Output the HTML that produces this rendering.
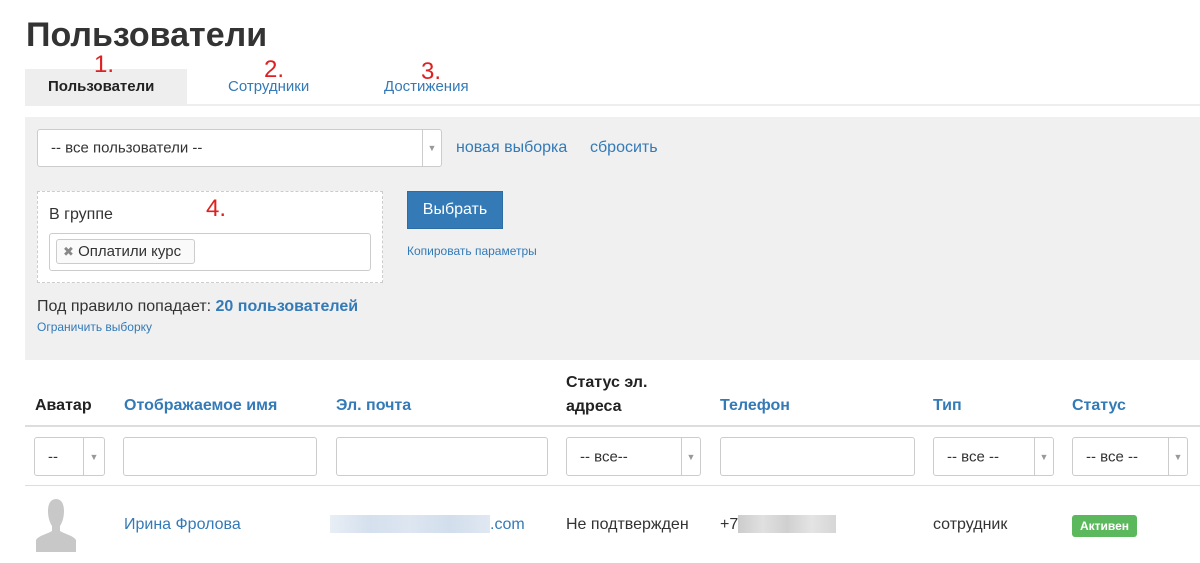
<!DOCTYPE html><html><head><meta charset="utf-8"><style>
body{margin:0;width:1200px;height:563px;overflow:hidden;background:#fff;font-family:"Liberation Sans",sans-serif;position:relative;color:#333}
.a{position:absolute;white-space:nowrap}
.lnk{color:#337ab7}
.red{color:#e02020;font-size:24px}
.sel{position:absolute;background:#fff;border:1px solid #ccc;border-radius:3px;box-sizing:border-box;font-size:15px}
.sel .ar{position:absolute;right:0;top:0;bottom:0;width:18px;border-left:1px solid #ccc;color:#999;font-size:9px;display:flex;align-items:center;justify-content:center}
.sel .t{position:absolute;left:13px;top:50%;transform:translateY(-50%)}
.inp{position:absolute;background:#fff;border:1px solid #ccc;border-radius:3px;box-sizing:border-box}
.h{position:absolute;font-size:16px;font-weight:bold}
</style></head><body>
<div class="a" style="left:26px;top:16px;font-size:34px;font-weight:bold;color:#333">Пользователи</div>
<div class="a" style="left:25px;top:69px;width:162px;height:36px;background:#eee"></div>
<div class="a" style="left:25px;top:104px;width:1175px;height:2px;background:#eee"></div>
<div class="a" style="left:48px;top:78px;font-size:15px;font-weight:bold;color:#222">Пользователи</div>
<div class="a lnk" style="left:228px;top:78px;font-size:15px">Сотрудники</div>
<div class="a lnk" style="left:384px;top:78px;font-size:15px">Достижения</div>
<div class="a red" style="left:94px;top:51px">1.</div>
<div class="a red" style="left:264px;top:56px">2.</div>
<div class="a red" style="left:421px;top:58px">3.</div>
<div class="a" style="left:25px;top:117px;width:1175px;height:243px;background:#f0f0f0"></div>
<div class="sel" style="left:37px;top:129px;width:405px;height:38px"><span class="t">-- все пользователи --</span><span class="ar">▼</span></div>
<div class="a lnk" style="left:456px;top:139px;font-size:16px">новая выборка</div>
<div class="a lnk" style="left:590px;top:139px;font-size:16px">сбросить</div>
<div class="a" style="left:37px;top:191px;width:346px;height:92px;border:1px dashed #ccc;box-sizing:border-box;background:#fff"></div>
<div class="a" style="left:49px;top:206px;font-size:16px">В группе</div>
<div class="a red" style="left:206px;top:195px">4.</div>
<div class="inp" style="left:49px;top:233px;width:322px;height:38px"></div>
<div class="a" style="left:56px;top:239px;width:139px;height:25px;border:1px solid #ccc;border-radius:3px;box-sizing:border-box;background:#fafafa;font-size:15px;padding:3px 0 0 6px"><span style="color:#888;font-size:13px">✖</span> Оплатили курс</div>
<div class="a" style="left:407px;top:191px;width:96px;height:38px;background:#337ab7;border:1px solid #2e6da4;box-sizing:border-box;color:#fff;font-size:16px;text-align:center;line-height:36px">Выбрать</div>
<div class="a lnk" style="left:407px;top:244px;font-size:12px">Копировать параметры</div>
<div class="a" style="left:37px;top:298px;font-size:16px">Под правило попадает: <b class="lnk">20 пользователей</b></div>
<div class="a lnk" style="left:37px;top:320px;font-size:12px">Ограничить выборку</div>
<div class="h" style="left:35px;top:397px;color:#222">Аватар</div>
<div class="h lnk" style="left:124px;top:397px">Отображаемое имя</div>
<div class="h lnk" style="left:336px;top:397px">Эл. почта</div>
<div class="h" style="left:566px;top:371px;color:#222;line-height:24px;white-space:normal;width:120px">Статус эл. адреса</div>
<div class="h lnk" style="left:720px;top:397px">Телефон</div>
<div class="h lnk" style="left:933px;top:397px">Тип</div>
<div class="h lnk" style="left:1072px;top:397px">Статус</div>
<div class="a" style="left:25px;top:425px;width:1175px;height:2px;background:#ddd"></div>
<div class="sel" style="left:34px;top:437px;width:71px;height:39px"><span class="t">--</span><span class="ar" style="width:20px">▼</span></div>
<div class="inp" style="left:123px;top:437px;width:194px;height:39px"></div>
<div class="inp" style="left:336px;top:437px;width:212px;height:39px"></div>
<div class="sel" style="left:566px;top:437px;width:135px;height:39px"><span class="t">-- все--</span><span class="ar">▼</span></div>
<div class="inp" style="left:720px;top:437px;width:195px;height:39px"></div>
<div class="sel" style="left:933px;top:437px;width:121px;height:39px"><span class="t">-- все --</span><span class="ar">▼</span></div>
<div class="sel" style="left:1072px;top:437px;width:116px;height:39px"><span class="t">-- все --</span><span class="ar">▼</span></div>
<div class="a" style="left:25px;top:485px;width:1175px;height:1px;background:#ddd"></div>
<svg class="a" style="left:36px;top:498px" width="40" height="54" viewBox="0 0 40 54"><path d="M20 1c-6 0-8 6-8 12 0 7 2 12 4 15v5c-5 3-14 5-16 9v12h40V42c-2-4-11-6-16-9v-5c2-3 4-8 4-15 0-6-2-12-8-12z" fill="#c8c8c8"/></svg>
<div class="a lnk" style="left:124px;top:516px;font-size:16px">Ирина Фролова</div>
<div class="a" style="left:330px;top:515px;width:160px;height:18px;background:linear-gradient(90deg,#e8eef5,#d5e0ee,#dde6f1,#d2deec,#e0e8f2)"></div>
<div class="a lnk" style="left:490px;top:516px;font-size:16px">.com</div>
<div class="a" style="left:566px;top:516px;font-size:16px">Не подтвержден</div>
<div class="a" style="left:720px;top:516px;font-size:16px">+7</div>
<div class="a" style="left:738px;top:515px;width:98px;height:18px;background:linear-gradient(90deg,#ccc,#e0e0e0,#d0d0d0,#e4e4e4,#d6d6d6)"></div>
<div class="a" style="left:933px;top:516px;font-size:16px">сотрудник</div>
<div class="a" style="left:1072px;top:515px;width:65px;height:22px;background:#5cb85c;border-radius:3px;color:#fff;font-size:12px;font-weight:bold;text-align:center;line-height:22px">Активен</div>
</body></html>
